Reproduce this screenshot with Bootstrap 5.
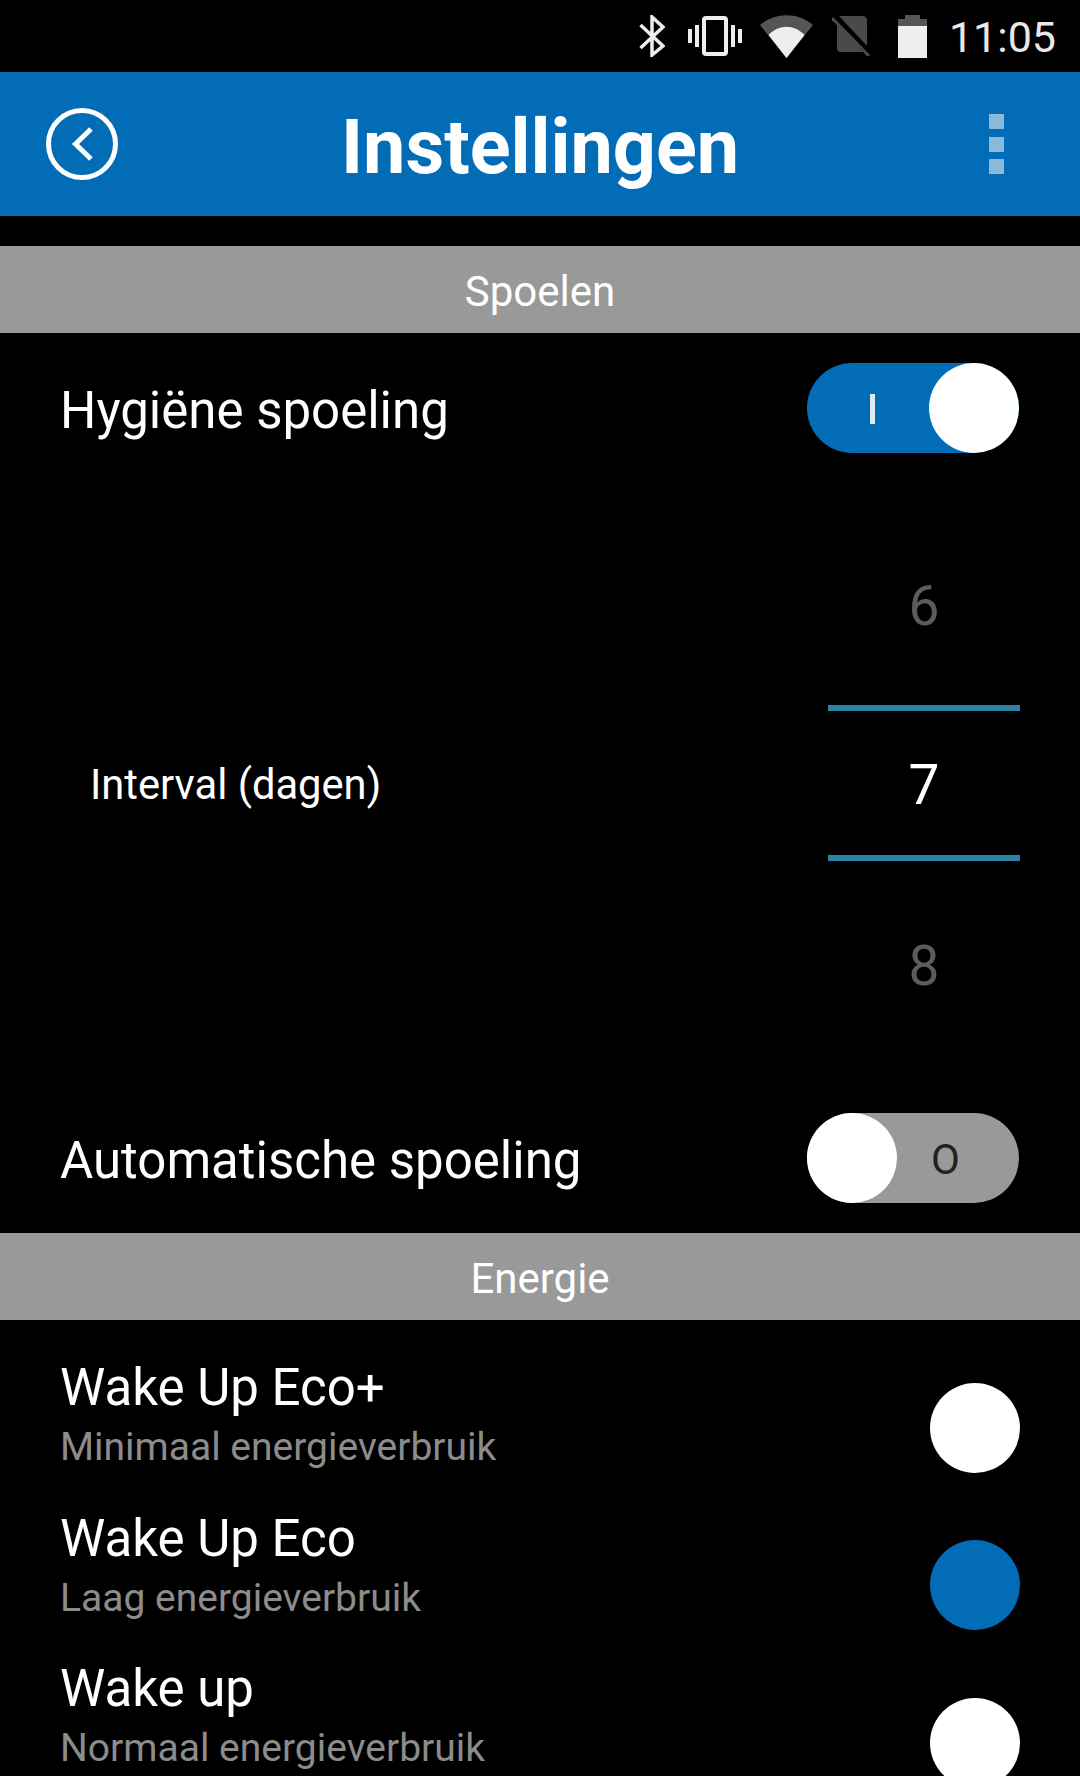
<!DOCTYPE html>
<html lang="nl">
<head>
<meta charset="utf-8">
<title>Instellingen</title>
<link href="https://cdn.jsdelivr.net/npm/bootstrap@5.3.0/dist/css/bootstrap.min.css" rel="stylesheet">
<style>
html,body{background:#000;margin:0;height:1776px;overflow:hidden}
body{font-family:Roboto,"Liberation Sans",sans-serif;color:#fff}
.sbar{height:72px;padding-right:24px}
.sbar-time{font-size:43px;line-height:1;color:#e8e8e8;margin-left:22px;margin-top:2px}
.ic-vib{margin-left:23px}
.ic-wifi{margin-left:18px}
.ic-sim{margin-left:19px}
.ic-bat{margin-left:27px}
.hdr{height:144px;background:#026cb6;padding:0 46px}
.hdr-side{flex:1 1 0}
.hdr-title{font-size:75.500px;font-weight:700;line-height:1;margin-top:7px}
.hdr-dots{width:15px;gap:7.5px;margin-right:30px}
.hdr-dots span{display:block;width:15px;height:15px;background:#8ab9dc}
.band{height:87px;background:#999;font-size:42px;line-height:1;padding-top:4px}
.band-top{margin-top:30px}
.line-big{font-size:51px;line-height:1}
.line-hyg{margin-top:22px}
.line-auto{margin-bottom:17px}
.row-first{height:174px;padding:30px 61px 0 60px}
.row-auto{height:166px;padding:0 61px 30px 60px}
.swt{width:212px;height:90px;border-radius:45px;position:relative}
.swt-on{background:#026cb6}
.swt-off{background:#999}
.swt-knob{position:absolute;top:0;width:90px;height:90px;border-radius:50%;background:#fff}
.swt-on .swt-knob{right:0}
.swt-off .swt-knob{left:0}
.swt-i{position:absolute;left:63px;top:31px;width:5px;height:30px;background:#dfe9f2}
.swt-o{position:absolute;left:124px;top:26px;font-size:42px;line-height:1;color:#222}
.pick{height:560px;padding:0 60px 0 90px}
.pick-label{font-size:41.700px;line-height:1;margin-bottom:4px}
.pick-col{width:192px}
.pick-n{font-size:55px;line-height:1;text-align:center}
.pick-dim{color:#5c5c5c;height:198px}
.pick-dim-low{height:206px;padding-top:4px}
.pick-sel{height:156px;border-top:6px solid #2b84a8;border-bottom:6px solid #2b84a8;padding-top:4px}
.opts{padding:0 60px}
.opts-text{padding-top:42px}
.opt-item{height:150.5px}
.opt-sub{font-size:39px;line-height:1;color:#8c8c8c;margin-top:15px}
.opts-dots{padding-top:63px;gap:67.25px}
.dot{display:block;width:90px;height:90px;border-radius:50%;background:#fff}
.dot-on{background:#026cb6}
</style>
</head>
<body>
<div class="d-flex justify-content-end align-items-center sbar">
  <svg width="26" height="42" viewBox="0 0 26 42" fill="none" stroke="#eee" stroke-width="3.5"><path d="M1.5 33 24 12 13 2v38l11-9L1.500 10"/></svg>
  <svg class="ic-vib" width="54" height="40" viewBox="0 0 54 40" fill="#eee"><rect x="16" y="2" width="22" height="36" rx="2" fill="none" stroke="#eee" stroke-width="4"/><rect x="0" y="13" width="4" height="14"/><rect x="7" y="9" width="4" height="22"/><rect x="43" y="9" width="4" height="22"/><rect x="50" y="13" width="4" height="14"/></svg>
  <svg class="ic-wifi" width="53" height="43" viewBox="0 0 53 43"><path d="M0 10C15-3 38-3 53 10L26.500 43Z" fill="#555"/><path d="M8.500 20C19 9 34 9 44.500 20L26.500 43Z" fill="#eee"/></svg>
  <svg class="ic-sim" width="39" height="40" viewBox="0 0 39 40"><path d="M8 0h22q5 0 5 4v32H9q-4 0-4-4V3q0-3 3-3Z" fill="#4a4a4a"/><path d="M3 1l36 38" stroke="#000" stroke-width="7"/><path d="M0 2l37 38" stroke="#4a4a4a" stroke-width="3"/></svg>
  <svg class="ic-bat" width="29" height="43" viewBox="0 0 29 43"><path d="M7 0h15v4h7v8H0V4h7Z" fill="#555"/><rect y="11" width="29" height="32" fill="#eee"/></svg>
  <span class="sbar-time">11:05</span>
</div>
<header class="hdr d-flex align-items-center">
  <div class="hdr-side d-flex"><svg width="72" height="72" viewBox="0 0 72 72" fill="none" stroke="#fff" stroke-width="5"><circle cx="36" cy="36" r="33.500"/><path d="M45 21 29.500 36 45 51"/></svg></div>
  <div class="hdr-title">Instellingen</div>
  <div class="hdr-side d-flex justify-content-end"><div class="hdr-dots d-flex flex-column"><span></span><span></span><span></span></div></div>
</header>
<div class="band band-top d-flex align-items-center justify-content-center">Spoelen</div>
<div class="row-first d-flex align-items-start justify-content-between">
  <span class="line-big line-hyg">Hygiëne spoeling</span>
  <div class="swt swt-on"><span class="swt-i"></span><span class="swt-knob"></span></div>
</div>
<div class="pick d-flex align-items-center justify-content-between">
  <span class="pick-label">Interval (dagen)</span>
  <div class="pick-col">
    <div class="pick-n pick-dim d-flex align-items-center justify-content-center">6</div>
    <div class="pick-n pick-sel d-flex align-items-center justify-content-center">7</div>
    <div class="pick-n pick-dim pick-dim-low d-flex align-items-center justify-content-center">8</div>
  </div>
</div>
<div class="row-auto d-flex align-items-end justify-content-between">
  <span class="line-big line-auto">Automatische spoeling</span>
  <div class="swt swt-off"><span class="swt-knob"></span><span class="swt-o">O</span></div>
</div>
<div class="band d-flex align-items-center justify-content-center">Energie</div>
<div class="opts d-flex justify-content-between">
  <div class="opts-text">
    <div class="opt-item"><div class="line-big">Wake Up Eco+</div><div class="opt-sub">Minimaal energieverbruik</div></div>
    <div class="opt-item"><div class="line-big">Wake Up Eco</div><div class="opt-sub">Laag energieverbruik</div></div>
    <div class="opt-item"><div class="line-big">Wake up</div><div class="opt-sub">Normaal energieverbruik</div></div>
  </div>
  <div class="opts-dots d-flex flex-column">
    <span class="dot"></span>
    <span class="dot dot-on"></span>
    <span class="dot"></span>
  </div>
</div>
<script src="https://cdn.jsdelivr.net/npm/bootstrap@5.3.0/dist/js/bootstrap.bundle.min.js"></script>
</body>
</html>
